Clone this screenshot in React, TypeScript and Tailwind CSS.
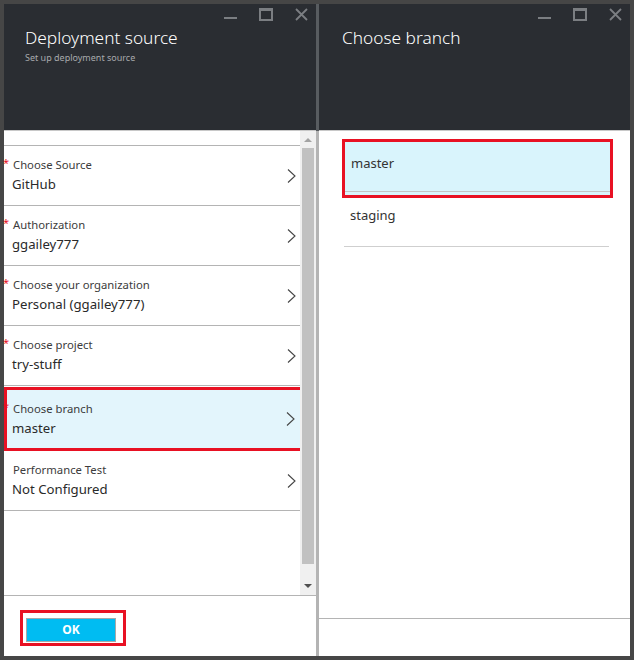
import React from "react";

const font = { fontFamily: '"Noto Sans", "Open Sans", sans-serif' };

function WindowControls() {
  return (
    <div className="flex items-start justify-end gap-[21px] pr-[8px] pt-[4px] h-[17px]">
      <svg width="14" height="13" viewBox="0 0 14 13">
        <rect x="0" y="9" width="13" height="2" fill="#7b7e82" />
      </svg>
      <svg width="15" height="13" viewBox="0 0 15 13">
        <rect x="1" y="1" width="12" height="11" fill="none" stroke="#7b7e82" strokeWidth="2" />
        <rect x="0" y="0" width="14" height="3" fill="#7b7e82" />
      </svg>
      <svg width="13" height="13" viewBox="0 0 13 13">
        <path d="M1 1 L12 12 M12 1 L1 12" stroke="#7b7e82" strokeWidth="1.8" />
      </svg>
    </div>
  );
}

function Chevron() {
  return (
    <svg width="9" height="14" viewBox="0 0 9 14" className="shrink-0">
      <path d="M1 0.5 L8 7 L1 13.5" fill="none" stroke="#444" strokeWidth="1.1" />
    </svg>
  );
}

type Row = { label: string; value: string; required: boolean; active?: boolean };

const rows: Row[] = [
  { label: "Choose Source", value: "GitHub", required: true },
  { label: "Authorization", value: "ggailey777", required: true },
  { label: "Choose your organization", value: "Personal (ggailey777)", required: true },
  { label: "Choose project", value: "try-stuff", required: true },
  { label: "Choose branch", value: "master", required: true, active: true },
  { label: "Performance Test", value: "Not Configured", required: false },
];

function SettingRow({ row }: { row: Row }) {
  const text = (
    <div className="flex-1 relative">
      {row.required && (
        <span className="absolute left-[-9px] top-[-1px] z-10 text-[#e81123] text-[11px] leading-[14px]">*</span>
      )}
      <div className="text-[11.3px] leading-[16px] text-[#3c3c3c] pl-[1px]">{row.label}</div>
      <div className="text-[13.2px] leading-[20px] text-[#2a2a2a] mt-[1px]">{row.value}</div>
    </div>
  );
  if (row.active) {
    return (
      <div className="h-[64px] mt-[1px] border-[3px] border-[#e81123] bg-[#e3f5fc] flex items-center pl-[5px] pr-[5px] mr-[-3px]">
        {text}
        <Chevron />
      </div>
    );
  }
  return (
    <div className="h-[60px] border-b border-[#b4b4b4] flex items-center pl-[8px] pr-[4px]">
      {text}
      <Chevron />
    </div>
  );
}

export default function App() {
  return (
    <div className="w-[634px] h-[660px] bg-[#464646] p-[4px] flex" style={font}>
      {/* left blade */}
      <div className="w-[312px] flex flex-col">
        <div className="h-[127px] bg-[#2a2d32] border-b border-[#c8c8c8]">
          <WindowControls />
          <div className="pl-[21px] pt-[5px]">
            <h1 className="text-[17.3px] leading-[24px] font-light text-white">Deployment source</h1>
            <p className="text-[9px] leading-[14px] text-[#a8aaad] mt-[1px]">Set up deployment source</p>
          </div>
        </div>
        <div className="flex-1 flex bg-white">
          <div className="flex-1 flex flex-col">
            <div className="h-[15px] border-b border-[#b4b4b4]" />
            {rows.map((r) => (
              <SettingRow key={r.label} row={r} />
            ))}
          </div>
          <div className="w-[16px] bg-[#f0f0f0] flex flex-col items-center">
            <svg width="10" height="17" viewBox="0 0 10 17">
              <path d="M1 11 L5 7 L9 11 Z" fill="#a3a3a3" />
            </svg>
            <div className="w-[12px] h-[416px] bg-[#c1c1c1]" />
            <div className="flex-1" />
            <svg width="10" height="14" viewBox="0 0 10 14">
              <path d="M1 3 L9 3 L5 7 Z" fill="#505050" />
            </svg>
          </div>
        </div>
        <div className="h-[61px] bg-white border-t border-[#b4b4b4] pl-[16px] pt-[14px]">
          <div className="w-[106px] h-[36px] border-[3px] border-[#e81123] p-[3px]">
            <button className="w-[90px] h-[24px] bg-[#00bcf2] border border-[#a8a8a8] text-white font-bold text-[12px] leading-[20px]">
              OK
            </button>
          </div>
        </div>
      </div>

      {/* divider */}
      <div className="w-[3px] flex flex-col">
        <div className="h-[127px] bg-[#585c60]" />
        <div className="flex-1 bg-[#b4b4b4]" />
      </div>

      {/* right blade */}
      <div className="flex-1 flex flex-col">
        <div className="h-[127px] bg-[#2a2d32] border-b border-[#c8c8c8]">
          <WindowControls />
          <div className="pl-[23px] pt-[5px]">
            <h1 className="text-[17.3px] leading-[24px] font-light text-white">Choose branch</h1>
          </div>
        </div>
        <div className="flex-1 bg-white flex flex-col">
          <div className="flex-1 pt-[8px] pl-[23px] pr-[17px]">
            <div className="h-[59px] border-[3px] border-[#e81123] bg-[#d9f4fc]">
              <div className="h-[50px] border-b border-[#c4c4c4] pl-[6px] pt-[11px] text-[13px] leading-[20px] text-[#333]">
                master
              </div>
            </div>
            <div className="mx-[2px] mr-[4px] h-[49px] border-b border-[#cfcfcf] pl-[6px] pt-[7px] text-[13px] leading-[20px] text-[#333]">
              staging
            </div>
          </div>
          <div className="h-[38px] border-t border-[#b4b4b4]" />
        </div>
      </div>
    </div>
  );
}
